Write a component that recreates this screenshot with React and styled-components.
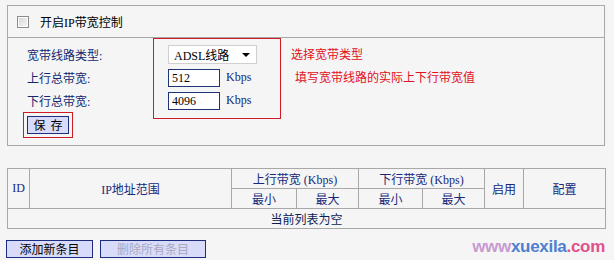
import * as React from "react"
import styled, {createGlobalStyle} from 'styled-components'

const GlobalStyle = createGlobalStyle`
  body {
    margin: 0;
    background: #f5f5f5;
    font-family: "Liberation Serif", "Noto Sans CJK SC", serif;
    font-size: 12px;
  }
`

const Page = styled.div`
  width: 598px;
  padding: 5px 0 0 7px;
`

const Panel = styled.div`
  border: 1px solid #a8a8a8;
  height: 139px;
`

const PanelHeader = styled.div`
  display: flex;
  align-items: center;
  height: 31px;
  padding-left: 9px;
  border-bottom: 1px solid #a8a8a8;
  color: #000;
`

const Checkbox = styled.span`
  box-sizing: border-box;
  width: 12px;
  height: 12px;
  margin-right: 11px;
  border: 1px solid #8c8c8c;
  background: linear-gradient(135deg, #d6d6d6, #f6f6f6);
  box-shadow: inset 0 0 0 1px #fff;
`

const Form = styled.div`
  display: flex;
  padding-left: 15px;
`

const LabelCol = styled.div`
  display: flex;
  flex-direction: column;
  align-items: flex-start;
  width: 130px;
  padding-top: 5px;
`

const Row = styled.div`
  display: flex;
  align-items: center;
  height: 23px;
  padding-left: ${p => p.$indent || 0}px;
  color: ${p => p.$red ? '#e2101a' : '#14286e'};
  white-space: nowrap;
`

const Highlight = styled.div`
  box-sizing: border-box;
  border: 1px solid #cf1b24;
`

const ControlBox = styled(Highlight)`
  width: 128px;
  height: 81px;
  padding: 4px 0 0 14px;
`

const SaveFrame = styled(Highlight)`
  padding: 3px;
`

const Select = styled.div`
  box-sizing: border-box;
  display: flex;
  align-items: center;
  justify-content: space-between;
  width: 89px;
  height: 19px;
  padding: 0 6px 0 5px;
  background: #fff;
  border: 1px solid #d0d0d0;
  color: #000;
`

const Caret = styled.span`
  width: 0;
  height: 0;
  border-left: 4px solid transparent;
  border-right: 4px solid transparent;
  border-top: 4px solid #000;
`

const Input = styled.div`
  box-sizing: border-box;
  width: 52px;
  height: 18px;
  padding: 0 3px;
  line-height: 16px;
  background: #fff;
  border: 1px solid #1f3477;
  color: #000;
`

const Unit = styled.span`
  margin-left: 6px;
  color: #14286e;
`

const HintCol = styled.div`
  padding: 4px 0 0 10px;
`

const Button = styled.button`
  box-sizing: border-box;
  height: 18px;
  width: ${p => p.$w}px;
  padding: 0;
  background: #d8dcfa;
  border: 1px solid #1c2d80;
  color: ${p => p.disabled ? '#a8a9bd' : '#000'};
  font-family: "Noto Sans CJK SC", sans-serif;
  font-size: 12px;
  line-height: 16px;
  letter-spacing: ${p => p.$spaced ? '5px' : '0'};
  text-indent: ${p => p.$spaced ? '5px' : '0'};
`

const Table = styled.table`
  width: 598px;
  margin-top: 22px;
  border-collapse: collapse;
  table-layout: fixed;
  color: #16297a;
`

const Cell = styled.td`
  height: 19px;
  padding: 0;
  border: 1px solid #a8a8a8;
  text-align: center;
  font-weight: normal;
  white-space: nowrap;
  color: ${p => p.$dark ? '#0d1c55' : 'inherit'};
`

const Footer = styled.div`
  display: flex;
  align-items: center;
  gap: 7px;
  margin: 11px 0 0 -1px;
`

const Watermark = styled.div`
  margin-left: auto;
  margin-top: -4px;
  font-family: "Liberation Sans", sans-serif;
  font-size: 17px;
  font-weight: bold;
  letter-spacing: -0.3px;
`

const Part = styled.span`
  color: ${p => p.$c};
`

const cols = [22, 202, 65, 62, 64, 62, 39, 82]

export default function App() {
  return (
    <Page>
      <GlobalStyle/>
      <Panel>
        <PanelHeader>
          <Checkbox/>
          开启IP带宽控制
        </PanelHeader>
        <Form>
          <LabelCol>
            <Row $indent={4}>宽带线路类型:</Row>
            <Row $indent={4}>上行总带宽:</Row>
            <Row $indent={4}>下行总带宽:</Row>
            <SaveFrame>
              <Button $w={42} $spaced>保存</Button>
            </SaveFrame>
          </LabelCol>
          <ControlBox>
            <Row>
              <Select>ADSL线路<Caret/></Select>
            </Row>
            <Row>
              <Input>512</Input><Unit>Kbps</Unit>
            </Row>
            <Row>
              <Input>4096</Input><Unit>Kbps</Unit>
            </Row>
          </ControlBox>
          <HintCol>
            <Row $red>选择宽带类型</Row>
            <Row $red $indent={4}>填写宽带线路的实际上下行带宽值</Row>
          </HintCol>
        </Form>
      </Panel>

      <Table>
        <colgroup>
          {cols.map((w, i) => <col key={i} style={{width: w}}/>)}
        </colgroup>
        <thead>
          <tr>
            <Cell as="th" rowSpan={2}>ID</Cell>
            <Cell as="th" rowSpan={2}>IP地址范围</Cell>
            <Cell as="th" colSpan={2}>上行带宽 (Kbps)</Cell>
            <Cell as="th" colSpan={2}>下行带宽 (Kbps)</Cell>
            <Cell as="th" rowSpan={2}>启用</Cell>
            <Cell as="th" rowSpan={2}>配置</Cell>
          </tr>
          <tr>
            <Cell as="th">最小</Cell>
            <Cell as="th">最大</Cell>
            <Cell as="th">最小</Cell>
            <Cell as="th">最大</Cell>
          </tr>
        </thead>
        <tbody>
          <tr>
            <Cell colSpan={8} $dark>当前列表为空</Cell>
          </tr>
        </tbody>
      </Table>

      <Footer>
        <Button $w={87}>添加新条目</Button>
        <Button $w={106} disabled>删除所有条目</Button>
        <Watermark>
          <Part $c="#c79ad0">www</Part>
          <Part $c="#4f7fd0">xuexila</Part>
          <Part $c="#e2508e">.com</Part>
        </Watermark>
      </Footer>
    </Page>
  )
}
